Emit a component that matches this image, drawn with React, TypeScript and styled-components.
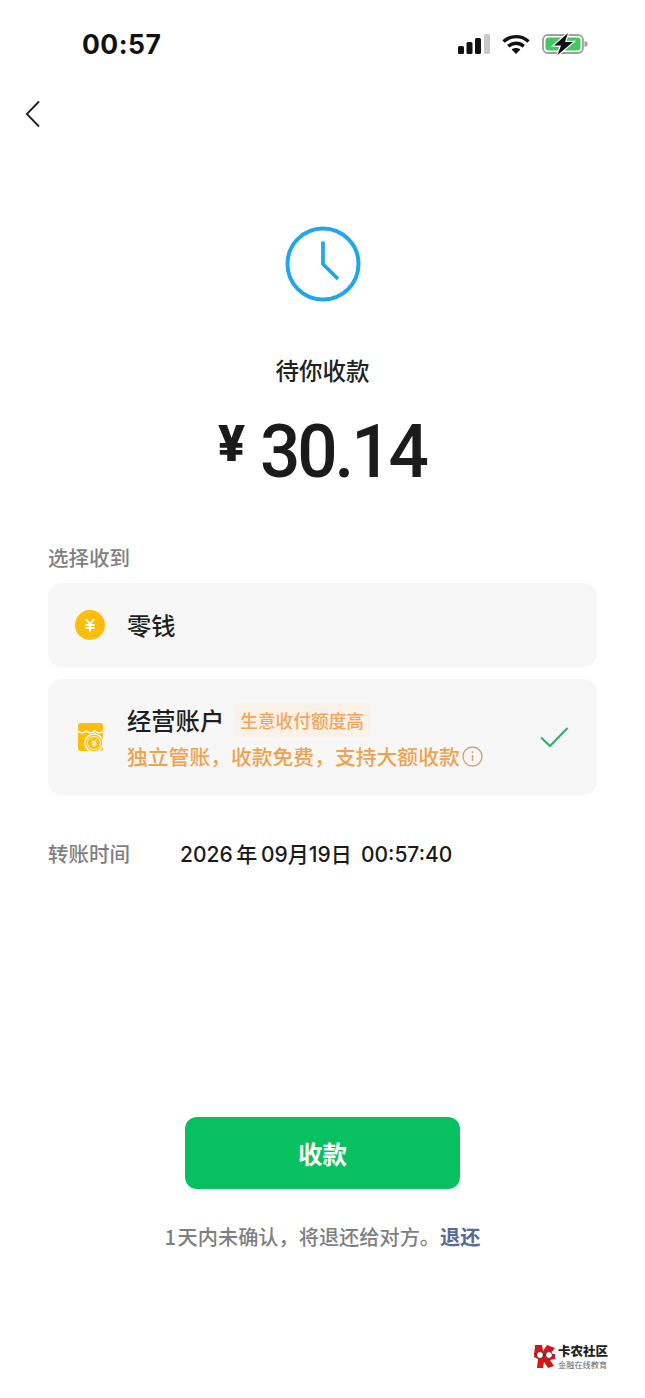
import * as React from 'react';
import styled, { createGlobalStyle } from 'styled-components';

const CJK = `"Noto Sans CJK SC", "Noto Sans", sans-serif`;

const GlobalStyle = createGlobalStyle`
    html, body {
        margin: 0;
        padding: 0;
        background: #fff;
    }
    body {
        font-family: ${CJK};
    }
`;

const Page = styled.div`
    position: relative;
    width: 645px;
    height: 1398px;
    overflow: hidden;
    background: #fff;
    color: #1b1b1b;
`;

const StatusBar = styled.div`
    display: flex;
    align-items: center;
    justify-content: space-between;
    height: 87px;
    padding: 0 56px 0 82px;
    box-sizing: border-box;
`;

const Time = styled.span`
    font-family: Inter, "Liberation Sans", sans-serif;
    font-size: 26.5px;
    font-weight: 700;
    letter-spacing: 0.5px;
    color: #111;
`;

const StatusIcons = styled.div`
    display: flex;
    align-items: center;
    gap: 12px;
`;

const BackRow = styled.div`
    display: flex;
    height: 54px;
    padding: 13px 0 0 25px;
    box-sizing: border-box;
`;

const Hero = styled.div`
    display: flex;
    flex-direction: column;
    align-items: center;
    padding-top: 85px;
`;

const Title = styled.div`
    margin-top: 51px;
    font-size: 23.5px;
    line-height: 34px;
    font-weight: 500;
    color: #222;
`;

const Amount = styled.div`
    display: flex;
    align-items: flex-start;
    height: 90px;
    margin-top: 19px;
    padding-left: 6px;
    font-family: Roboto, sans-serif;
`;

const Yuan = styled.span`
    margin: 12px 15px 0 0;
    font-size: 50px;
    line-height: 52px;
    font-weight: 900;
`;

const Digits = styled.span`
    margin-top: 2px;
    font-size: 74px;
    line-height: 88px;
    font-weight: 500;
    letter-spacing: -3.2px;
    transform: scaleX(0.96);
    transform-origin: left;
`;

const Section = styled.div`
    display: flex;
    flex-direction: column;
    gap: 12px;
    margin-top: 43px;
    padding: 0 48px;
`;

const Label = styled.div`
    font-size: 20.5px;
    line-height: 36px;
    font-weight: 500;
    color: #7f7f7f;
`;

const Cards = styled.div`
    display: flex;
    flex-direction: column;
    gap: 12px;
    margin-top: -4px;
`;

const Card = styled.div<{ $tall?: boolean }>`
    display: flex;
    align-items: center;
    height: ${({ $tall }) => ($tall ? 116 : 84)}px;
    padding: 0 28px 0 27px;
    border-radius: 14px;
    background: #f7f7f7;
    box-sizing: border-box;
`;

const CardIcon = styled.div<{ $inset?: number }>`
    flex: none;
    display: flex;
    width: 52px;
    padding-left: ${({ $inset }) => $inset ?? 0}px;
    box-sizing: border-box;
`;

const CardBody = styled.div`
    flex: 1;
    display: flex;
    flex-direction: column;
    gap: 4px;
`;

const CardHead = styled.div`
    display: flex;
    align-items: center;
    gap: 9.5px;
`;

const CardName = styled.span`
    font-size: 24.3px;
    line-height: 34px;
    font-weight: 500;
    color: #1e1e1e;
`;

const Tag = styled.span`
    padding: 0 6.5px;
    border-radius: 6px;
    font-size: 17.7px;
    line-height: 34px;
    font-weight: 500;
    color: #f2a659;
    background: #faf1e8;
`;

const CardNote = styled.div`
    display: flex;
    align-items: center;
    gap: 2px;
    font-size: 20.8px;
    line-height: 30px;
    font-weight: 500;
    color: #f0a250;
`;

const InfoRow = styled.div`
    display: flex;
    align-items: center;
    margin-top: 40px;
    padding: 0 48px;
`;

const InfoLabel = styled(Label)`
    width: 132px;
`;

const InfoValue = styled.div`
    font-family: Inter, ${CJK};
    font-size: 21px;
    font-weight: 500;
    color: #1b1b1b;
    white-space: pre;
`;

const Footer = styled.div`
    display: flex;
    flex-direction: column;
    align-items: center;
    margin-top: 246px;
`;

const PrimaryButton = styled.button`
    width: 275px;
    height: 72px;
    border: 0;
    border-radius: 12px;
    background: #07c160;
    color: #fff;
    font-family: ${CJK};
    font-size: 24.5px;
    font-weight: 700;
`;

const Hint = styled.div`
    margin-top: 31px;
    font-size: 20.2px;
    line-height: 34px;
    font-weight: 500;
    word-spacing: -3px;
    color: #7f7f7f;
`;

const HintLink = styled.a`
    color: #576b95;
    font-weight: 700;
`;

const Watermark = styled.div`
    position: absolute;
    left: 533px;
    top: 1345px;
    display: flex;
    align-items: flex-start;
    gap: 2px;
`;

const MarkText = styled.div`
    display: flex;
    flex-direction: column;
    gap: 3px;
`;

const MarkName = styled.span`
    font-size: 12.5px;
    line-height: 12px;
    font-weight: 900;
    color: #222;
`;

const MarkSub = styled.span`
    font-size: 8.2px;
    line-height: 8px;
    color: #666;
`;

const StatusGlyphs = () => (
    <StatusIcons>
        <svg width="32" height="20" viewBox="0 0 32 20">
            <rect x="0" y="12" width="6" height="8" rx="1.5" fill="#111" />
            <rect x="8.5" y="8" width="6" height="12" rx="1.5" fill="#111" />
            <rect x="17" y="4" width="6" height="16" rx="1.5" fill="#111" />
            <rect x="26" y="0" width="6" height="20" rx="1.5" fill="#c9c9c9" />
        </svg>
        <svg width="28" height="20" viewBox="0 0 28 20">
            <path d="M1.5 7.5C8.5 1 19.5 1 26.5 7.5" fill="none" stroke="#111" strokeWidth="3.4" />
            <path d="M6.2 12.2C10.8 8.2 17.2 8.2 21.8 12.2" fill="none" stroke="#111" strokeWidth="3.4" />
            <path d="M9.6 15.6C12 13.6 16 13.6 18.4 15.6L14 20Z" fill="#111" />
        </svg>
        <svg width="47" height="22" viewBox="0 0 47 22">
            <rect x="1" y="2" width="40" height="18" rx="5" fill="none" stroke="#a0a0a0" strokeWidth="1.8" />
            <rect x="3.5" y="4.5" width="35" height="13" rx="3" fill="#45c85f" />
            <path d="M42.5 8v6c2-.4 3.2-1.5 3.2-3s-1.2-2.600-3.2-3z" fill="#a0a0a0" />
            <path d="M26 0 12 12.5h7L15.5 22 31 9h-8z" fill="#111" stroke="#fff" strokeWidth="2.4" paintOrder="stroke" />
        </svg>
    </StatusIcons>
);

const ClockIcon = () => (
    <svg width="76" height="76" viewBox="0 0 76 76">
        <circle cx="38" cy="38" r="35.5" fill="none" stroke="#1ea7ec" strokeWidth="4" />
        <path d="M38 15.5V38l15 15" fill="none" stroke="#1ea7ec" strokeWidth="3.7" />
    </svg>
);

const CoinIcon = () => (
    <svg width="30" height="30" viewBox="0 0 30 30">
        <circle cx="15" cy="15" r="15" fill="#fdbe0b" />
        <path d="M10.8 9 15 14l4.2-5M10.5 15h9M10.5 18h9M15 14v7.5" fill="none" stroke="#fff" strokeWidth="1.9" />
    </svg>
);

const ShopIcon = () => (
    <svg width="25" height="28" viewBox="0 0 25 28">
        <path d="M3 0h19a3 3 0 0 1 3 3v23a2 2 0 0 1-2 2H2a2 2 0 0 1-2-2V3a3 3 0 0 1 3-3z" fill="#fdbe0b" />
        <path d="M0 8c2.5 2.6 5.8 2.6 8.3 0 2.5 2.6 5.8 2.6 8.4 0 2.5 2.6 5.8 2.6 8.3 0" fill="none" stroke="#fff" strokeWidth="1.3" />
        <circle cx="16" cy="20" r="9" fill="#fdbe0b" stroke="#f7f7f7" strokeWidth="1.6" />
        <circle cx="16" cy="20" r="6.6" fill="none" stroke="#fff" strokeWidth="0.9" />
        <path d="M13.5 16.5 16 19.5l2.5-3M13.5 20h5M13.5 22h5M16 19.5V24" fill="none" stroke="#fff" strokeWidth="1" />
    </svg>
);

const InfoIcon = () => (
    <svg width="21" height="21" viewBox="0 0 21 21">
        <circle cx="10.5" cy="10.5" r="9.5" fill="none" stroke="#d9a468" strokeWidth="1.4" />
        <path d="M10.5 9v6" stroke="#d9a468" strokeWidth="1.5" />
        <circle cx="10.5" cy="6.2" r="1" fill="#d9a468" />
    </svg>
);

const LogoMark = () => (
    <svg width="23" height="23" viewBox="0 0 23 23">
        <path d="M2 0h7l1 6 4-6 8 3-5 6h5v5l-5 1 4 6-6 2-4-6-1 6H4l1-9-4-2z" fill="#d7141a" />
        <circle cx="7" cy="10" r="3.4" fill="#fff" stroke="#222" strokeWidth="0.8" />
        <circle cx="16" cy="10" r="3.4" fill="#fff" stroke="#222" strokeWidth="0.8" />
        <path d="M10.4 10h2.2M3.6 10 1 8" fill="none" stroke="#222" strokeWidth="0.8" />
    </svg>
);

export default function App() {
    return (
        <Page>
            <GlobalStyle />
            <StatusBar>
                <Time>00:57</Time>
                <StatusGlyphs />
            </StatusBar>
            <BackRow>
                <svg width="16" height="28" viewBox="0 0 16 28">
                    <path d="M14 1.5 1.800 14 14 26.500" fill="none" stroke="#1f1f1f" strokeWidth="1.8" />
                </svg>
            </BackRow>
            <Hero>
                <ClockIcon />
                <Title>待你收款</Title>
                <Amount>
                    <Yuan>¥</Yuan>
                    <Digits>30.14</Digits>
                </Amount>
            </Hero>
            <Section>
                <Label>选择收到</Label>
                <Cards>
                    <Card>
                        <CardIcon><CoinIcon /></CardIcon>
                        <CardName>零钱</CardName>
                    </Card>
                    <Card $tall>
                        <CardIcon $inset={3}><ShopIcon /></CardIcon>
                        <CardBody>
                            <CardHead>
                                <CardName>经营账户</CardName>
                                <Tag>生意收付额度高</Tag>
                            </CardHead>
                            <CardNote>独立管账，收款免费，支持大额收款<InfoIcon /></CardNote>
                        </CardBody>
                        <svg width="30" height="22" viewBox="0 0 30 22">
                            <path d="M2 11.5 11 20 28.5 2" fill="none" stroke="#28b06c" strokeWidth="2" />
                        </svg>
                    </Card>
                </Cards>
            </Section>
            <InfoRow>
                <InfoLabel>转账时间</InfoLabel>
                <InfoValue>{'2026\u2009年\u200909月19日 \u200900:57:40'}</InfoValue>
            </InfoRow>
            <Footer>
                <PrimaryButton>收款</PrimaryButton>
                <Hint>1 天内未确认，将退还给对方。<HintLink>退还</HintLink></Hint>
            </Footer>
            <Watermark>
                <LogoMark />
                <MarkText>
                    <MarkName>卡农社区</MarkName>
                    <MarkSub>金融在线教育</MarkSub>
                </MarkText>
            </Watermark>
        </Page>
    );
}
